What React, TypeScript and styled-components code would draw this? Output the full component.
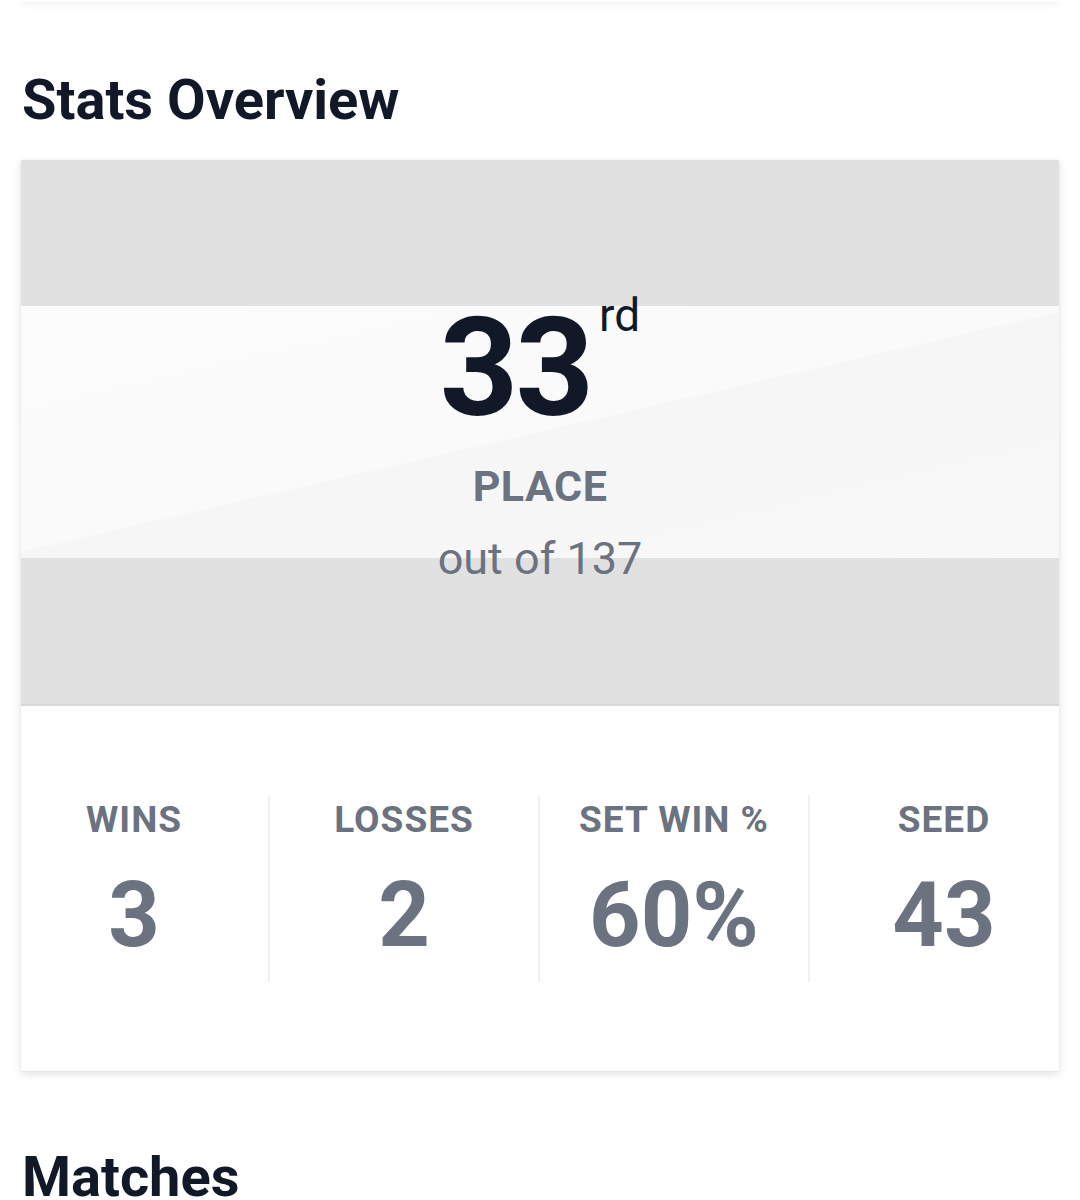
import React from "react";
import styled, { createGlobalStyle } from "styled-components";

const GlobalStyle = createGlobalStyle`
  html, body {
    margin: 0;
    padding: 0;
    background: #fff;
    font-family: Roboto, "Liberation Sans", Arial, sans-serif;
  }
`;

const stats = [
  { label: "Wins", value: "3" },
  { label: "Losses", value: "2" },
  { label: "Set Win %", value: "60%" },
  { label: "Seed", value: "43" },
];

function App() {
  return (
    <Page>
      <GlobalStyle />
      <PrevCard />
      <SectionTitle>Stats Overview</SectionTitle>
      <Card>
        <Banner>
          <RankRow>
            <Rank>33</Rank>
            <Suffix>rd</Suffix>
          </RankRow>
          <PlaceLabel>Place</PlaceLabel>
          <OutOf>out of 137</OutOf>
        </Banner>
        <StatsRow>
          {stats.map((s, i) => (
            <StatCol key={s.label} divider={i > 0}>
              <StatLabel>{s.label}</StatLabel>
              <StatValue>{s.value}</StatValue>
            </StatCol>
          ))}
        </StatsRow>
      </Card>
      <SectionTitle $space={74}>Matches</SectionTitle>
    </Page>
  );
}

const Page = styled.div`
  padding: 0 21px;
  height: 1200px;
  overflow: hidden;
  box-sizing: border-box;
`;

const PrevCard = styled.div`
  height: 2px;
  background: #fff;
  box-shadow: 0 2px 6px rgba(0, 0, 0, 0.12);
`;

const SectionTitle = styled.h2<{ $space?: number }>`
  margin: ${(p) => p.$space ?? 66}px 0 28px 1px;
  font-size: 56px;
  line-height: 64px;
  font-weight: 700;
  color: #111827;
`;

const Card = styled.div`
  background: #fff;
  box-shadow: 0 3px 8px rgba(0, 0, 0, 0.12), 0 0 2px rgba(0, 0, 0, 0.06);
`;

const Banner = styled.div`
  height: 546px;
  box-sizing: border-box;
  padding-top: 138px;
  display: flex;
  flex-direction: column;
  align-items: center;
  border-bottom: 2px solid #d9d9d9;
  background:
    linear-gradient(167deg, #fcfcfc 0%, #fafafa 49.8%, #f6f6f6 50.2%, #f8f8f8 100%)
      center / 100% 252px no-repeat,
    #e1e1e1;
`;

const RankRow = styled.div`
  display: flex;
  align-items: flex-start;
  color: #111827;
`;

const Rank = styled.span`
  font-size: 137px;
  line-height: 1;
  font-weight: 700;
  letter-spacing: -3px;
  margin-top: 2px;
`;

const Suffix = styled.span`
  font-size: 46px;
  line-height: 1;
  font-weight: 400;
  margin: -6px 0 0 8px;
`;

const PlaceLabel = styled.div`
  margin-top: 24px;
  font-size: 43px;
  line-height: 1.2;
  font-weight: 700;
  letter-spacing: 0.5px;
  text-transform: uppercase;
  color: #6b7280;
`;

const OutOf = styled.div`
  margin-top: 19px;
  font-size: 45px;
  line-height: 1.2;
  font-weight: 400;
  color: #6b7280;
`;

const StatsRow = styled.div`
  display: grid;
  grid-template-columns: repeat(4, 1fr);
  margin: 0 -19px 0 -23px;
  padding: 89px 0 89px;
`;

const StatCol = styled.div<{ divider: boolean }>`
  display: flex;
  flex-direction: column;
  align-items: center;
  padding: 3px 0 12px;
  border-left: 2px solid ${(p) => (p.divider ? "#f1f1f1" : "transparent")};
`;

const StatLabel = styled.div`
  font-size: 37px;
  line-height: 1.2;
  font-weight: 700;
  letter-spacing: 1px;
  text-transform: uppercase;
  color: #6b7280;
`;

const StatValue = styled.div`
  margin-top: 20px;
  font-size: 90px;
  line-height: 1.2;
  font-weight: 700;
  color: #6b7280;
`;

export default App;
